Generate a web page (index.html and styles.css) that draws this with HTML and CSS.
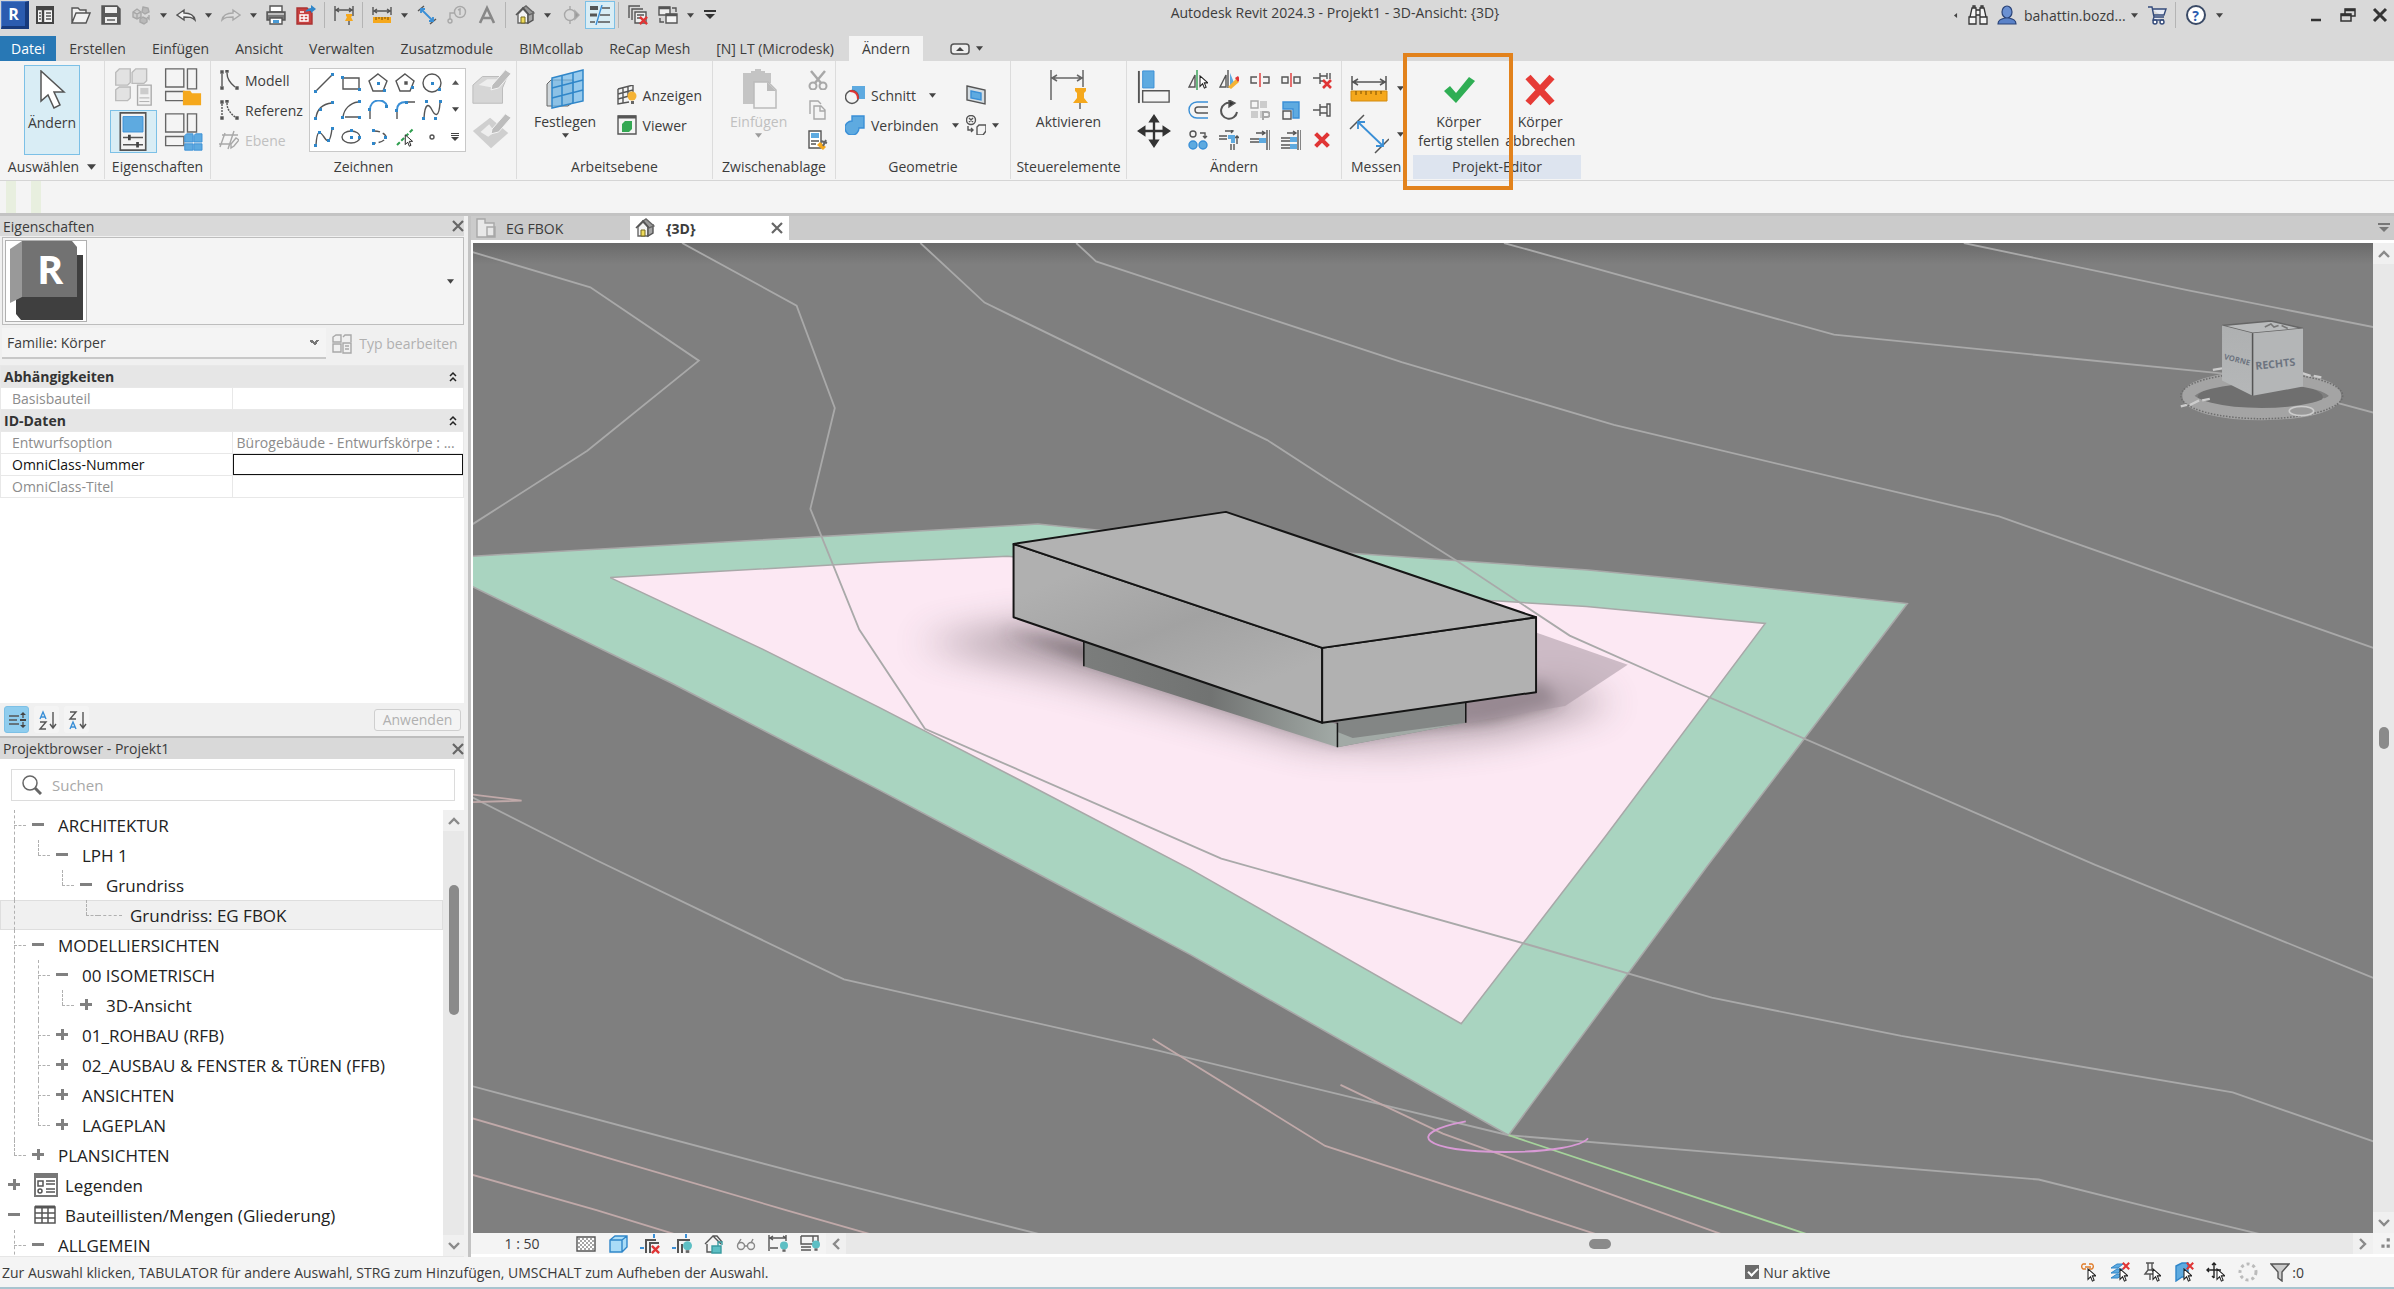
FILE: index.html
```html
<!DOCTYPE html>
<html lang="de">

<head>
    <meta charset="UTF-8">
    <meta name="viewport" content="width=device-width, initial-scale=1.0">
    <title>Autodesk Revit 2024.3 - Projekt1 - 3D-Ansicht: {3D}</title>
    <link rel="stylesheet" href="styles.css">
</head>

<body>
    <!-- shared icon parts -->
    <svg class="defs" width="0" height="0" aria-hidden="true">
        <symbol id="caret" viewBox="0 0 8 5"><path d="M0 0h8L4 5z" fill="#444" stroke="none"/></symbol>
        <symbol id="cursor" viewBox="0 0 10 16"><path d="M1 1v12l3-3 2 5 2-1-2-5h4z" fill="#fff" stroke="#222" stroke-width="1.2"/></symbol>
        <symbol id="redx" viewBox="0 0 10 10"><path d="M1 1l8 8M9 1l-8 8" stroke="#e03535" stroke-width="2.6" fill="none"/></symbol>
        <symbol id="bulb" viewBox="0 0 10 14"><circle cx="5" cy="5" r="5" fill="#5dbfc4" stroke="none"/><path d="M3 10h4v3H3z" fill="#666" stroke="none"/></symbol>
        <symbol id="home" viewBox="0 0 20 20">
            <path d="M3 9v9h10V9L8 4z" fill="#f4f4f4" stroke="#666"/>
            <path d="M13 9v9l5-3V7z" fill="#a5a5a5" stroke="#555"/>
            <path d="M8 3l3-2 8 7-5 2z" fill="#999" stroke="#666"/>
            <path d="M1 10l7-7 6 7" fill="none" stroke="#555" stroke-width="1.6"/>
            <path d="M6 12h4v6H6z" fill="#f0dc5a" stroke="#776a20" stroke-width="1"/>
        </symbol>
        <symbol id="cross" viewBox="0 0 12 12"><path d="M1 1l10 10M11 1L1 11" stroke="#666" stroke-width="2.2" fill="none"/></symbol>
        <symbol id="chev" viewBox="0 0 12 8"><path d="M1 7l5-5 5 5" stroke="#8a8a8a" stroke-width="2.4" fill="none"/></symbol>
        <symbol id="collapse" viewBox="0 0 8 12"><path d="M1 5l3-3 3 3M1 10l3-3 3 3" stroke="#222" stroke-width="1.5" fill="none"/></symbol>
    </svg>

    <header class="titlebar">
        <div class="quick">
            <button class="logo" aria-label="Revit">R</button>
            <button class="q" aria-label="Startseite"><svg class="ic" viewBox="0 0 20 20"><path d="M2 2h16v16H2z" fill="#f4f4f4" stroke="#444" stroke-width="2"/><path d="M2 4h16M8 4v14" stroke="#444" stroke-width="2.4"/><path d="M11 8h5M11 11h5M11 14h5M4 8h2M4 11h2M4 14h2"/></svg></button>
            <span class="gap"></span>
            <button class="q" aria-label="Öffnen"><svg class="ic" viewBox="0 0 20 20"><path d="M1 18V3h6l2 2h6v3M1 18L5 8h14l-4 10z" fill="#f2f2f2"/></svg></button>
            <button class="q" aria-label="Speichern"><svg class="ic" viewBox="0 0 20 20"><path d="M1 1h15l3 3v15H1z" fill="#5a5a5a"/><path d="M4 2h12v6H4zM4 12h12v6H4z" fill="#eee" stroke="none"/><path d="M6 15h8"/></svg></button>
            <button class="q" aria-label="Synchronisieren"><svg class="ic gr" viewBox="0 0 20 20"><path d="M2 7l4-3 4 3v5l-4 2-4-2zM2 7l4 2 4-2M6 9v5" fill="#ccc"/><path d="M12 2l5 1 1 4-4 2-3-2zM9 14l3-2 4 2v3l-3 2-4-2z" fill="#b9b9b9"/><path d="M18 10v4l-2-2"/></svg></button>
            <button class="c" aria-label="Mehr"><svg><use href="#caret"/></svg></button>
            <button class="q" aria-label="Rückgängig"><svg class="ic" viewBox="0 0 20 20"><path d="M1 10l7-5v3c6 0 10 2 11 7-3-3-6-3-11-3v3z" fill="#f2f2f2"/></svg></button>
            <button class="c" aria-label="Mehr"><svg><use href="#caret"/></svg></button>
            <button class="q" aria-label="Wiederherstellen"><svg class="ic gr" viewBox="0 0 20 20"><path d="M19 10l-7-5v3C6 8 2 10 1 15c3-3 6-3 11-3v3z" fill="#ddd"/></svg></button>
            <button class="c" aria-label="Mehr"><svg><use href="#caret"/></svg></button>
            <button class="q" aria-label="Drucken"><svg class="ic" viewBox="0 0 20 20"><path d="M4 1h12v6H4z" fill="#fff"/><path d="M1 7h18v8H1z" fill="#777"/><path d="M2 9h16" stroke="#ddd"/><path d="M4 13h12v6H4z" fill="#fff"/><path d="M7 15h6v3H7z" fill="#4a9bd6" stroke="none"/></svg></button>
            <button class="q" aria-label="PDF"><svg class="ic" viewBox="0 0 20 20"><path d="M1 3h10l5 5v11H1z" fill="#c8403f" stroke="#a33"/><path d="M4 10h8v6H4zM8 10v6M4 7h4M4 13h8" stroke="#fff"/><path d="M9 7c2-3 4-4 6-4V0l5 4-5 4V6c-2 0-4 0-6 1z" fill="#2f86c9" stroke="none"/></svg></button>
            <span class="sep"></span>
            <button class="q" aria-label="Bemaßung fixieren"><svg class="ic" viewBox="0 0 20 20"><path d="M1 1v15M19 1v10M2 5h16M5 3L2 5l3 2M15 3l3 2-3 2"/><path d="M12 9h6v2l-1 1 2 4h-8l2-4-1-1z" fill="#f5a81c" stroke="none"/><path d="M15 16v4" stroke="#555"/></svg></button>
            <span class="sep"></span>
            <button class="q" aria-label="Messen"><svg class="ic" viewBox="0 0 20 20"><path d="M1 2v8M19 2v8M2 6h16M5 4L2 6l3 2M15 4l3 2-3 2"/><path d="M1 12h18v6H1z" fill="#f5a81c" stroke="none"/><path d="M4 12v3M7 12v2M10 12v3M13 12v2M16 12v3" stroke="#7a4f00" stroke-width="1"/></svg></button>
            <button class="c" aria-label="Mehr"><svg><use href="#caret"/></svg></button>
            <button class="q" aria-label="Ausgerichtete Bemaßung"><svg class="ic" viewBox="0 0 20 20"><path d="M1 6l6-5M13 19l6-5"/><path d="M4 4l12 12M4 8V4h4M16 12v4h-4" stroke="#3a8fd6" stroke-width="1.8"/></svg></button>
            <button class="q" aria-label="Nach Kategorie beschriften"><svg class="ic gr" viewBox="0 0 20 20"><circle cx="13" cy="7" r="5.500"/><path d="M13 10V4l-2 1M8 8H3v6"/><circle cx="3" cy="16" r="2"/></svg></button>
            <button class="q" aria-label="Text"><svg class="ic gr" viewBox="0 0 20 20"><path d="M3 18L10 3l7 15M6 13h8" stroke="#888" stroke-width="2.6"/></svg></button>
            <span class="sep"></span>
            <button class="q" aria-label="3D-Standardansicht"><svg class="ic"><use href="#home"/></svg></button>
            <button class="c" aria-label="Mehr"><svg><use href="#caret"/></svg></button>
            <button class="q" aria-label="Schnitt"><svg class="ic gr" viewBox="0 0 20 20"><circle cx="10" cy="10" r="5.500"/><path d="M10 1v4M10 15v4M15 6l4 4-4 4z" fill="#999"/></svg></button>
            <button class="q on" aria-label="Feine Linien"><svg class="ic" viewBox="0 0 20 20"><path d="M0 3h8" stroke-width="4"/><path d="M0 10h7" stroke-width="3"/><path d="M0 17h5M12 3h8M10 10h10M8 17h12" stroke-width="1.500"/><path d="M12 0L6 20" stroke="#3a8fd6"/></svg></button>
            <span class="sep"></span>
            <button class="q" aria-label="Inaktive Ansichten schließen"><svg class="ic" viewBox="0 0 20 20"><path d="M1 13V1h11M4 15V4h11" /><path d="M7 7h11v11H7zM9 10h7M9 13h4" fill="#eee"/><svg x="11" y="11" width="9" height="9"><use href="#redx"/></svg></svg></button>
            <button class="q" aria-label="Fenster wechseln"><svg class="ic" viewBox="0 0 20 20"><path d="M1 2h11v8H1z" fill="#eee"/><path d="M8 9h11v9H8z" fill="#f4f4f4"/><path d="M1 3h11M8 10h11" stroke-width="2.5"/><path d="M14 3h4v4M2 13v4h4" /></svg></button>
            <button class="c" aria-label="Mehr"><svg><use href="#caret"/></svg></button>
            <button class="q narrow" aria-label="Schnellzugriff anpassen"><svg class="drop" viewBox="0 0 12 10"><path d="M0 1h12" stroke="#333" stroke-width="2"/><path d="M1 4h10L6 9z" fill="#333"/></svg></button>
        </div>
        <div class="apptitle">Autodesk Revit 2024.3 - Projekt1 - 3D-Ansicht: {3D}</div>
        <div class="account">
            <button class="c" aria-label="Suche einblenden"><svg class="left" viewBox="0 0 5 8"><path d="M5 0v8L0 4z" fill="#444"/></svg></button>
            <button class="q" aria-label="Suchen"><svg class="ic" viewBox="0 0 20 20"><path d="M1 12h7v7H1zM12 12h7v7h-7zM2 12l2-9h4v9M18 12l-2-9h-4v9M8 5h4v5H8zM5 1h2v2H5zM13 1h2v2h-2z" fill="#f4f4f4" stroke="#333" stroke-width="1.300"/></svg></button>
            <button class="user"><svg class="ic" viewBox="0 0 20 20"><path d="M1 19c0-4 3-5 7-6V9h4v4c4 1 7 2 7 6z" fill="#5a82c8" stroke="#2b4478" stroke-width="1.200"/><ellipse cx="10" cy="7" rx="5" ry="6" fill="#6a90d2" stroke="#2b4478" stroke-width="1.200"/></svg>bahattin.bozd...<svg class="ca"><use href="#caret"/></svg></button>
            <button class="q" aria-label="App Store"><svg class="ic" viewBox="0 0 20 20"><path d="M1 2h4l2 10h10M5 4h14l-2 6H7M7 12l-1 3h11" fill="#e8ecf5" stroke="#334a7a"/><circle cx="8" cy="17" r="2" fill="#fff" stroke="#334a7a"/><circle cx="15" cy="17" r="2" fill="#fff" stroke="#334a7a"/></svg></button>
            <span class="sep"></span>
            <button class="help" aria-label="Hilfe">?</button>
            <button class="c" aria-label="Mehr"><svg><use href="#caret"/></svg></button>
        </div>
        <div class="winbtns">
            <button aria-label="Minimieren"><svg viewBox="0 0 16 16"><path d="M3 13h10" stroke="#333" stroke-width="2.500"/></svg></button>
            <button aria-label="Wiederherstellen"><svg viewBox="0 0 16 16"><path d="M5 7V2h10v7h-4M1 7h10v7H1z" fill="none" stroke="#333" stroke-width="1.500"/><path d="M5 3h10M1 8h10" stroke="#333" stroke-width="2.500"/></svg></button>
            <button aria-label="Schließen"><svg viewBox="0 0 16 16"><path d="M2 2l12 12M14 2L2 14" stroke="#333" stroke-width="3"/></svg></button>
        </div>
    </header>

    <nav class="tabs">
        <button class="file">Datei</button>
        <button>Erstellen</button>
        <button>Einfügen</button>
        <button>Ansicht</button>
        <button>Verwalten</button>
        <button>Zusatzmodule</button>
        <button>BIMcollab</button>
        <button>ReCap Mesh</button>
        <button>[N] LT (Microdesk)</button>
        <button class="active">Ändern</button>
        <button class="mini" aria-label="Multifunktionsleiste minimieren"><svg class="pill" viewBox="0 0 20 12"><rect x="1" y="1" width="18" height="10" rx="3" fill="#eee" stroke="#555" stroke-width="1.500"/><path d="M6 8l4-4 4 4z" fill="#444"/></svg><svg class="ca"><use href="#caret"/></svg></button>
    </nav>

    <section class="ribbon">
        <div class="panel p-select">
            <div class="body">
                <button class="big on"><svg viewBox="0 0 40 40"><path d="M9 1v30l7-6 6 13 6-3-6-13h10z" fill="#fff" stroke="#555" stroke-width="1.500"/></svg>Ändern</button>
            </div>
            <h2>Auswählen <svg class="ca"><use href="#caret"/></svg></h2>
        </div>

        <div class="panel p-props">
            <div class="body quad">
                <button aria-label="Typeneigenschaften"><svg viewBox="0 0 44 44"><g fill="#e2e2e2" stroke="#bbb" stroke-width="1.500"><path d="M3 6l4-4h12v15l-3 3H3zM21 6l4-4h12v13l-3 3H21zM3 25l4-3h12v12l-3 3H3z"/></g><path d="M27 20h15v22H27z" fill="#f2f2f2" stroke="#aaa" stroke-width="1.500"/><path d="M30 23h9v7h-9z" fill="#ccc"/><path d="M29 34h11M29 38h11" stroke="#aaa"/></svg></button>
                <button aria-label="Familienkategorie"><svg viewBox="0 0 44 44"><path d="M4 2h20v20H4zM28 2h10v22H28zM4 27h20v10H4z" fill="none" stroke="#666" stroke-width="1.500"/><path d="M23 26h8l2 3h10v13H23z" fill="#f5a81c"/></svg></button>
                <button class="on" aria-label="Eigenschaften"><svg viewBox="0 0 44 44"><path d="M8 1h28v41H8z" fill="#f4f4f4" stroke="#555" stroke-width="1.800"/><path d="M11 5h22v17H11z" fill="#5eaae0" stroke="#3a8fd6"/><path d="M11 28h22M11 36h22" stroke="#555" stroke-width="1.500"/><path d="M18 25v6M27 33v6" stroke="#444" stroke-width="3"/></svg></button>
                <button aria-label="Familientypen"><svg viewBox="0 0 44 44"><path d="M4 2h20v20H4zM28 2h10v20H28zM4 27h20v10H4z" fill="none" stroke="#666" stroke-width="1.500"/><path d="M25 26l2-2h7v9h-9zM35 26l2-2h7v9h-9zM25 35h9v7h-9zM35 35h9v7h-9z" fill="#5eaae0" stroke="#3a8fd6"/></svg></button>
            </div>
            <h2>Eigenschaften</h2>
        </div>

        <div class="panel p-draw">
            <div class="body">
                <div class="rows">
                    <button><svg class="ic" viewBox="0 0 20 20"><path d="M3 4v12M8 3c0 6 3 10 8 14"/><path d="M2 1h2v2H2zM2 17h2v2H2zM7 0h2v2H7zM17 17h2v2h-2z" fill="#444"/></svg>Modell</button>
                    <button><svg class="ic" viewBox="0 0 20 20"><path d="M3 4v12M8 3c0 6 3 10 8 14" stroke-dasharray="2 1"/><path d="M2 1h2v2H2zM2 17h2v2H2zM7 0h2v2H7zM17 17h2v2h-2z" fill="#444"/></svg>Referenz</button>
                    <button disabled><svg class="ic gr" viewBox="0 0 20 20"><path d="M6 3L1 17M15 1L9 19M3 5h16M0 14h12M12 14l5-6 3 2-5 6-3 2z"/></svg>Ebene</button>
                </div>
                <div class="gallery">
                    <button aria-label="Linie"><svg class="ic" viewBox="0 0 20 20"><path d="M2 18L18 2"/><path class="pt" d="M0 17h3v3H0zM17 0h3v3h-3z"/></svg></button>
                    <button aria-label="Rechteck"><svg class="ic" viewBox="0 0 20 20"><path d="M2 5h16v11H2z"/><path class="pt" d="M0 3h3v3H0zM17 15h3v3h-3z"/></svg></button>
                    <button aria-label="Inneres Polygon"><svg class="ic" viewBox="0 0 20 20"><path d="M10 1l9 7-4 10H5L1 8z"/><path class="pt" d="M9 9h3v3H9zM15 16h3v3h-3z"/></svg></button>
                    <button aria-label="Äußeres Polygon"><svg class="ic" viewBox="0 0 20 20"><path d="M10 1l9 7-4 10H5L1 8z"/><path d="M10 9h2v2h-2z" fill="#444"/><path class="pt" d="M16 13h3v3h-3z"/></svg></button>
                    <button aria-label="Kreis"><svg class="ic" viewBox="0 0 20 20"><circle cx="10" cy="10" r="9"/><path class="pt" d="M9 9h3v3H9zM16 15h3v3h-3z"/></svg></button>
                    <button class="sc" aria-label="Nach oben"><svg viewBox="0 0 8 5"><path d="M0 5h8L4 0z" fill="#555"/></svg></button>
                    <button aria-label="Bogen"><svg class="ic" viewBox="0 0 20 20"><path d="M2 18C3 9 9 4 18 3"/><path class="pt" d="M0 17h3v3H0zM5 8h3v3H5zM17 1h3v3h-3z"/></svg></button>
                    <button aria-label="Bogen Mittelpunkt"><svg class="ic" viewBox="0 0 20 20"><path d="M2 17C3 9 9 3 17 2M4 17h13" /><path class="pt" d="M0 16h3v3H0zM17 0h3v3h-3zM17 16h3v3h-3z"/></svg></button>
                    <button aria-label="Tangentialbogen"><svg class="ic" viewBox="0 0 20 20"><path d="M2 19v-9"/><path d="M2 10C2-2 17-2 19 6" stroke="#3a8fd6" stroke-width="2"/><path class="pt" d="M0 8h3v3H0zM17 5h3v3h-3z"/></svg></button>
                    <button aria-label="Rundung"><svg class="ic" viewBox="0 0 20 20"><path d="M2 19v-8M13 2h7"/><path d="M2 10c0-5 3-8 9-8" stroke="#3a8fd6" stroke-width="2"/><path class="pt" d="M0 9h3v3H0zM10 1h3v3h-3z"/></svg></button>
                    <button aria-label="Spline"><svg class="ic" viewBox="0 0 20 20"><path d="M2 18C3 2 7 4 10 10s7 8 8-7"/><path class="pt" d="M0 17h3v3H0zM3 0h3v3H3zM12 17h3v3h-3zM17 0h3v3h-3z"/></svg></button>
                    <button class="sc" aria-label="Nach unten"><svg><use href="#caret"/></svg></button>
                    <button aria-label="Freihandspline"><svg class="ic" viewBox="0 0 20 20"><path d="M2 18C3 2 6 4 10 10s6 6 8-8"/><path class="pt" d="M0 17h3v3H0zM4 4h3v3H4zM13 12h3v3h-3zM17 0h3v3h-3z"/></svg></button>
                    <button aria-label="Ellipse"><svg class="ic" viewBox="0 0 20 20"><ellipse cx="10" cy="10" rx="9" ry="6"/><path class="pt" d="M9 9h3v3H9zM9 2h3v3H9zM17 9h3v3h-3z"/></svg></button>
                    <button aria-label="Teilellipse"><svg class="ic" viewBox="0 0 20 20"><path d="M6 4c8 0 12 4 12 6s-4 6-12 6" stroke-dasharray="6 3"/><path class="pt" d="M4 2h3v3H4zM16 9h3v3h-3zM4 15h3v3H4z"/></svg></button>
                    <button aria-label="Linien auswählen"><svg class="ic" viewBox="0 0 20 20"><path d="M2 18L18 2" stroke="#2f9e4f" stroke-width="2" stroke-dasharray="4 2"/><svg x="9" y="7" width="9" height="13"><use href="#cursor"/></svg></svg></button>
                    <button aria-label="Punkt"><svg class="ic" viewBox="0 0 20 20"><circle cx="10" cy="10" r="2"/></svg></button>
                    <button class="sc" aria-label="Alle"><svg class="drop" viewBox="0 0 8 8"><path d="M0 0h8v1H0zM0 2h8v1H0zM0 4h8L4 8z" fill="#444"/></svg></button>
                </div>
                <div class="faces">
                    <button disabled aria-label="Auf Fläche zeichnen"><svg viewBox="0 0 44 44"><path d="M2 20l10-9h26l-5 12v16H2z" fill="#d6d6d6" stroke="#bbb"/><path d="M8 20l9-6h14l-6 9z" fill="#eee"/><path d="M22 20L36 4l6 4-13 15-8 2z" fill="#bdbdbd" stroke="#f4f4f4"/></svg></button>
                    <button disabled aria-label="Auf Arbeitsebene zeichnen"><svg viewBox="0 0 44 44"><path d="M2 22L20 8l19 16-18 16z" fill="#cfcfcf"/><path d="M10 23l9-8 6 8-7 5z" fill="#eee"/><path d="M22 20L36 4l6 4-13 15-8 2z" fill="#bdbdbd" stroke="#f4f4f4"/></svg></button>
                </div>
            </div>
            <h2>Zeichnen</h2>
        </div>

        <div class="panel p-plane">
            <div class="body">
                <button class="big"><svg viewBox="0 0 40 40"><path d="M2 15l4-4h22v22l-5 4H2z" fill="#cfd6da" stroke="#666"/><path d="M7 9l31-8v31L7 39z" fill="#6fb8ea" fill-opacity=".7" stroke="#2f86c9" stroke-width="1.500"/><path d="M17 6v31M28 4v30M7 19l31-8M7 29l31-8" stroke="#2f86c9" stroke-width="1.500"/></svg>Festlegen<svg class="ca"><use href="#caret"/></svg></button>
                <div class="rows two">
                    <button><svg class="ic" viewBox="0 0 20 20"><path d="M1 4l15-4v12M1 4v15l11-2M6 3v15M11 2v10M1 9l15-4M1 14l11-3"/><circle cx="15" cy="11" r="4.500" fill="#f5b335" stroke="none"/><path d="M14 16h3v3h-3z" fill="#666" stroke="none"/></svg>Anzeigen</button>
                    <button><svg class="ic" viewBox="0 0 20 20"><path d="M1 1h18v18H1z" fill="#f4f4f4"/><path d="M1 2h18" stroke-width="3"/><path d="M5 9l3-3h7v8l-3 3H5z" fill="#34a853" stroke="none"/></svg>Viewer</button>
                </div>
            </div>
            <h2>Arbeitsebene</h2>
        </div>

        <div class="panel p-clip">
            <div class="body">
                <button class="big" disabled><svg viewBox="0 0 40 40"><path d="M4 4h8V2h4V0h6v2h4v2h6v10H16v21H4z" fill="#c4c4c4"/><path d="M15 13h14l8 8v18H15z" fill="#f4f4f4" stroke="#bbb" stroke-width="1.500"/><path d="M28 13v9h9z" fill="#bbb"/></svg>Einfügen<svg class="ca"><use href="#caret"/></svg></button>
                <div class="rows icons">
                    <button aria-label="Ausschneiden"><svg class="ic gr" viewBox="0 0 20 20"><path d="M3 1l10 12M17 1L7 13" stroke-width="2.500"/><circle cx="5" cy="16" r="3.500" stroke-width="2"/><circle cx="15" cy="16" r="3.500" stroke-width="2"/></svg></button>
                    <button aria-label="Kopieren"><svg class="ic gr" viewBox="0 0 20 20"><path d="M2 14V1h8l3 3M6 6h7l4 4v9H6zM12 6v5h5"/></svg></button>
                    <button aria-label="Typeneigenschaften anpassen"><svg class="ic" viewBox="0 0 20 20"><path d="M1 1h12v17H1z" fill="#fff"/><path d="M3 3h8v5H3z" fill="#5eaae0" stroke="none"/><path d="M3 11h8M3 14h5"/><path d="M9 15l3-3 6 5-3 3z" fill="#f5a81c" stroke="none"/><path d="M13 11l6 2M18 10l-3 6" stroke="#666" stroke-width="2"/></svg></button>
                </div>
            </div>
            <h2>Zwischenablage</h2>
        </div>

        <div class="panel p-geo">
            <div class="body">
                <div class="rows two">
                    <button><svg class="ic" viewBox="0 0 20 20"><path d="M7 1h13v13H7z" fill="#5eaae0" stroke="none"/><circle cx="7" cy="12" r="6.500" fill="#f4f4f4"/><path d="M5 6c5 0 8 3 8 8" stroke="#e03535" stroke-width="2"/></svg>Schnitt<svg class="ca"><use href="#caret"/></svg></button>
                    <button><svg class="ic" viewBox="0 0 20 20"><path d="M7 1h12v12h-5a7 7 0 1 1-7-7z" fill="#5eaae0" stroke="#3a8fd6"/></svg>Verbinden<svg class="ca"><use href="#caret"/></svg></button>
                </div>
                <div class="rows two right">
                    <button aria-label="Öffnung"><svg class="ic" viewBox="0 0 20 20"><path d="M1 1l18 4v14L1 15z" fill="#d5dde2"/><path d="M5 6l10 2v7L5 13z" fill="#5eaae0" stroke="#3a8fd6"/></svg></button>
                    <button aria-label="Abbruch"><svg class="ic" viewBox="0 0 20 20"><circle cx="5" cy="5" r="4.500"/><path d="M3 3l4 4M7 3L3 7M2 11v4h5M5 13l2 2-2 2M11 12l2-2h7v6l-3 4h-6z"/></svg><svg class="ca"><use href="#caret"/></svg></button>
                </div>
            </div>
            <h2>Geometrie</h2>
        </div>

        <div class="panel p-ctrl">
            <div class="body">
                <button class="big"><svg viewBox="0 0 40 40"><path d="M3 1v30M35 1v17M4 9h30M9 6L4 9l5 3M29 6l5 3-5 3" fill="none" stroke="#666" stroke-width="1.500"/><path d="M27 19h11v3l-2 2v5l4 5H25l4-5v-5l-2-2z" fill="#f5a81c"/><path d="M32 34v6" stroke="#666" stroke-width="1.500"/></svg>Aktivieren</button>
            </div>
            <h2>Steuerelemente</h2>
        </div>

        <div class="panel p-modify">
            <div class="body">
                <div class="stack">
                    <button aria-label="Ausrichten"><svg viewBox="0 0 36 36"><path d="M2 1v34" stroke="#555" stroke-width="2"/><path d="M6 1h12v18H6z" fill="#5eaae0" stroke="#3a8fd6"/><path d="M6 22h28v12H6z" fill="#f4f4f4" stroke="#555" stroke-width="1.500"/></svg></button>
                    <button aria-label="Verschieben"><svg viewBox="0 0 36 36"><path d="M18 6v24M6 18h24" stroke="#333" stroke-width="2.500"/><path d="M18 0l6 9H12zM18 36l6-9H12zM0 18l9-6v12zM36 18l-9-6v12z" fill="#333"/></svg></button>
                </div>
                <div class="tools">
                    <button aria-label="Spiegeln - Achse wählen"><svg class="ic" viewBox="0 0 20 20"><path d="M7 5v12H1z"/><path d="M9 0v20" stroke="#2f9e4f"/><svg x="11" y="5" width="9" height="14"><use href="#cursor"/></svg></svg></button>
                    <button aria-label="Spiegeln - Achse zeichnen"><svg class="ic" viewBox="0 0 20 20"><path d="M7 5v12H1zM9 0v18"/><path d="M11 3v12h5z" fill="#5eaae0" stroke="none"/><path d="M9 17l8-8 3 3-8 7z" fill="#f5b335" stroke="none"/><path d="M16 8l3-2 2 3-2 3z" fill="#e03535" stroke="none"/></svg></button>
                    <button aria-label="Element teilen"><svg class="ic" viewBox="0 0 20 20"><path d="M7 7H1v6h6M13 7h6v6h-6"/><path d="M10 3v14" stroke="#e03535"/></svg></button>
                    <button aria-label="Mit Abstand teilen"><svg class="ic" viewBox="0 0 20 20"><path d="M1 7h6v6H1zM13 7h6v6h-6z"/><path d="M10 3v14" stroke="#e03535"/></svg></button>
                    <button aria-label="Lösen"><svg class="ic" viewBox="0 0 20 20"><path d="M1 8h7M8 3v11M8 6h7M8 11h5M15 3v6M18 3v6"/><svg x="10" y="9" width="10" height="10"><use href="#redx"/></svg></svg></button>
                    <button aria-label="Versatz"><svg class="ic" viewBox="0 0 20 20"><path d="M20 2H9a8 8 0 0 0 0 16h11" stroke="#3a8fd6"/><path d="M20 7H10a3 3 0 0 0 0 6h10"/></svg></button>
                    <button aria-label="Drehen"><svg class="ic" viewBox="0 0 20 20"><path d="M12 3a8 8 0 1 0 6 9" stroke-width="2"/><path d="M10 0l6 3-6 4z" fill="#333"/></svg></button>
                    <button disabled aria-label="Reihe"><svg class="ic gr" viewBox="0 0 20 20"><path d="M1 1h7v7H1z"/><path d="M10 1h7v7h-7zM1 11h7v7H1zM10 11h3v7h-3z" fill="#ccc" stroke="none"/><path d="M13 20v-8h4a2 2 0 0 1 0 5h-3" stroke-width="2"/></svg></button>
                    <button aria-label="Skalieren"><svg class="ic" viewBox="0 0 20 20"><path d="M2 2h16v16h-6V9H2z" fill="#5eaae0" stroke="#3a8fd6"/><path d="M2 11h8v8H2z"/></svg></button>
                    <button aria-label="Fixieren"><svg class="ic" viewBox="0 0 20 20"><path d="M1 10h7M8 4v12M8 7h7M8 13h7M15 4v12h3V4z"/></svg></button>
                    <button aria-label="Kopieren"><svg class="ic" viewBox="0 0 20 20"><circle cx="5" cy="4" r="3"/><path d="M12 3h5v5M15 6l2 2 2-2"/><path d="M5 11a4 4 0 1 1 0 8 4 4 0 0 1 0-8zM15 11a4 4 0 1 1 0 8 4 4 0 0 1 0-8z" fill="#5eaae0" stroke="#3a8fd6"/></svg></button>
                    <button aria-label="Stutzen/Dehnen Ecke"><svg class="ic" viewBox="0 0 20 20"><path d="M0 6h8M0 9h8M12 14v6M15 14v6M6 1h8M12 0l2 1-2 2M18 14V7M16 8l2-2 2 2"/><path d="M9 5h7v8h-4V9H9z" fill="#5eaae0" stroke="none"/></svg></button>
                    <button aria-label="Stutzen/Dehnen Element"><svg class="ic" viewBox="0 0 20 20"><path d="M0 9h9M0 12h9M6 3h8M12 1l3 2-3 2M17 0v20M20 0v20"/><path d="M9 8h7v5H9z" fill="#5eaae0" stroke="none"/></svg></button>
                    <button aria-label="Mehrere Elemente"><svg class="ic" viewBox="0 0 20 20"><path d="M0 8h9M0 11h9M0 15h9M0 18h9M6 3h8M12 1l3 2-3 2M17 0v20M20 0v20"/><path d="M9 7h7v5H9zM9 14h7v5H9z" fill="#5eaae0" stroke="none"/></svg></button>
                    <button aria-label="Löschen"><svg class="ic" viewBox="0 0 20 20"><svg x="2" y="2" width="16" height="16"><use href="#redx"/></svg></svg></button>
                </div>
            </div>
            <h2>Ändern</h2>
        </div>

        <div class="panel p-measure">
            <div class="body">
                <div class="stack wide">
                    <button aria-label="Messen"><svg viewBox="0 0 40 40"><path d="M3 8v14M37 8v14M4 14h32M9 11l-5 3 5 3M31 11l5 3-5 3" fill="none" stroke="#555" stroke-width="1.500"/><path d="M2 23h36v10H2z" fill="#f5a81c" stroke="#d28a0e"/><path d="M7 23v4M12 23v3M17 23v4M22 23v3M27 23v4M32 23v3" stroke="#7a4f00"/></svg><svg class="ca"><use href="#caret"/></svg></button>
                    <button aria-label="Bemaßung"><svg viewBox="0 0 40 40"><path d="M1 15L15 1M26 39l14-14" stroke="#555" stroke-width="1.500"/><path d="M9 8l25 24M9 15V8h7M34 25v7h-7" fill="none" stroke="#3a8fd6" stroke-width="1.800"/></svg><svg class="ca"><use href="#caret"/></svg></button>
                </div>
            </div>
            <h2>Messen</h2>
        </div>

        <div class="panel p-editor">
            <div class="body">
                <button class="big"><svg viewBox="0 0 40 40"><path d="M5 22l6-5 6 7L30 8l6 4-19 22z" fill="#2fae54"/></svg>Körper<br>fertig stellen</button>
                <button class="big"><svg viewBox="0 0 40 40"><path d="M8 8l24 26M32 8L8 34" stroke="#e63b36" stroke-width="7"/></svg>Körper<br>abbrechen</button>
            </div>
            <h2>Projekt-Editor</h2>
            <div class="highlight"></div>
        </div>
    </section>

    <div class="options"><i></i><i></i></div>

    <main>
        <aside>
            <div class="phead"><h3>Eigenschaften</h3><button aria-label="Schließen"><svg><use href="#cross"/></svg></button></div>
            <div class="typebox">
                <svg class="thumb" viewBox="0 0 80 80"><path d="M10 56h60V14h7v65H15l-5-6z" fill="#3f3f3f"/><path d="M4 8l12-8v56L4 62z" fill="#999"/><path d="M16 0h50l5 6v50H16z" fill="#727272"/><text x="31" y="43">R</text></svg>
                <svg class="ca"><use href="#caret"/></svg>
            </div>
            <div class="family">
                <select aria-label="Familie"><option>Familie: Körper</option></select>
                <button disabled><svg class="ic gr" viewBox="0 0 20 20"><path d="M1 3l3-2h5v7H1zM11 3l2-2h6v7M1 10h8v8H1z"/><path d="M11 9h8v10h-8zM13 12h4M13 15h4"/></svg>Typ bearbeiten</button>
            </div>
            <div class="propwrap">
                <table class="props">
                    <tr class="grp"><th colspan="2">Abhängigkeiten <svg><use href="#collapse"/></svg></th></tr>
                    <tr><td>Basisbauteil</td><td></td></tr>
                    <tr class="grp"><th colspan="2">ID-Daten <svg><use href="#collapse"/></svg></th></tr>
                    <tr><td>Entwurfsoption</td><td>Bürogebäude - Entwurfskörpe : ...</td></tr>
                    <tr class="edit"><td><label for="omni">OmniClass-Nummer</label></td><td><input id="omni" type="text"></td></tr>
                    <tr><td>OmniClass-Titel</td><td></td></tr>
                </table>
            </div>
            <div class="sortbar">
                <button class="on" aria-label="Gruppiert"><svg class="ic" viewBox="0 0 20 20"><path d="M2 6h10M2 10h8M2 14h10M16 3v5M16 12v5"/><path d="M13 5l3-3 3 3zM13 15l3 3 3-3zM13 9h6v2h-6z" fill="#444" stroke="none"/></svg></button>
                <button aria-label="Aufsteigend"><svg class="ic" viewBox="0 0 20 20"><path d="M3 9l3-7 3 7M4 7h4" stroke="#3a8fd6"/><path d="M3 12h6l-6 7h6M16 2v15M13 14l3 4 3-4"/></svg></button>
                <button aria-label="Absteigend"><svg class="ic" viewBox="0 0 20 20"><path d="M3 19l3-7 3 7M4 17h4" stroke="#3a8fd6"/><path d="M3 2h6L3 9h6M16 2v15M13 14l3 4 3-4"/></svg></button>
                <button class="apply" disabled>Anwenden</button>
            </div>
            <div class="phead second"><h3>Projektbrowser - Projekt1</h3><button aria-label="Schließen"><svg><use href="#cross"/></svg></button></div>
            <div class="browser">
                <label class="search"><svg viewBox="0 0 20 20"><circle cx="8" cy="8" r="7" fill="none" stroke="#666" stroke-width="1.500"/><path d="M13 13l6 6" stroke="#666" stroke-width="3"/></svg><input type="text" placeholder="Suchen" aria-label="Suchen"></label>
                <div class="treewrap">
                    <ul class="tree">
                        <li><i class="t"></i><b class="minus"></b>ARCHITEKTUR</li>
                        <li><i class="v"></i><i class="l"></i><b class="minus"></b>LPH 1</li>
                        <li><i class="v"></i><i></i><i class="l"></i><b class="minus"></b>Grundriss</li>
                        <li class="sel"><i class="v"></i><i></i><i></i><i class="l"></i><b class="dash"></b>Grundriss: EG FBOK</li>
                        <li><i class="t"></i><b class="minus"></b>MODELLIERSICHTEN</li>
                        <li><i class="v"></i><i class="t"></i><b class="minus"></b>00 ISOMETRISCH</li>
                        <li><i class="v"></i><i class="v"></i><i class="l"></i><b class="minus plus"></b>3D-Ansicht</li>
                        <li><i class="v"></i><i class="t"></i><b class="minus plus"></b>01_ROHBAU (RFB)</li>
                        <li><i class="v"></i><i class="t"></i><b class="minus plus"></b>02_AUSBAU &amp; FENSTER &amp; TÜREN (FFB)</li>
                        <li><i class="v"></i><i class="t"></i><b class="minus plus"></b>ANSICHTEN</li>
                        <li><i class="v"></i><i class="l"></i><b class="minus plus"></b>LAGEPLAN</li>
                        <li><i class="l"></i><b class="minus plus"></b>PLANSICHTEN</li>
                        <li><b class="minus plus"></b><svg viewBox="0 0 24 24"><path d="M1 1h22v22H1z" fill="#fff" stroke="#777" stroke-width="2"/><path d="M1 3h22" stroke="#777" stroke-width="4"/><path d="M4 8h5v5H4zM12 8h9M12 11h9M12 16h9M12 19h9" fill="none" stroke="#555" stroke-width="1.500"/><circle cx="6" cy="18" r="2" fill="none" stroke="#555" stroke-width="1.500"/></svg>Legenden</li>
                        <li><b class="minus"></b><svg viewBox="0 0 24 24"><path d="M1 4h20v16H1zM1 10h20M1 15h20M8 4v16M14 4v16" fill="#fff" stroke="#555" stroke-width="1.500"/><path d="M1 4h20" stroke="#555" stroke-width="3"/></svg>Bauteillisten/Mengen (Gliederung)</li>
                        <li><i class="t"></i><b class="minus"></b>ALLGEMEIN</li>
                    </ul>
                    <div class="vscroll">
                        <button aria-label="Nach oben"><svg class="chev"><use href="#chev"/></svg></button>
                        <span class="thumbbar"></span>
                        <button aria-label="Nach unten"><svg class="chev down"><use href="#chev"/></svg></button>
                    </div>
                </div>
            </div>
        </aside>

        <div class="docs">
            <div class="doctabs">
                <button><svg class="ic gr" viewBox="0 0 20 20"><path d="M1 1h8v4h9v13h-7v1H1zM11 9h8v10h-8z" fill="#e8e8e8"/></svg>EG FBOK</button>
                <button class="active"><svg class="ic"><use href="#home"/></svg>{3D}<svg class="x"><use href="#cross"/></svg></button>
                <button class="list" aria-label="Alle Ansichten"><svg class="drop" viewBox="0 0 12 10"><path d="M0 1h12" stroke="#777" stroke-width="2"/><path d="M1 4h10L6 9z" fill="#777"/></svg></button>
            </div>
            <div class="viewrow">
                <svg class="scene" viewBox="310 159 1244 648" preserveAspectRatio="xMidYMid slice">
                    <defs>
                        <linearGradient id="top" x1="0" y1="0" x2="0" y2="1"><stop offset="0" stop-color="#6a6a6a"/><stop offset="1" stop-color="#7f7f7f"/></linearGradient>
                        <linearGradient id="side" x1="0" y1="0.300" x2="0.500" y2="1"><stop offset="0" stop-color="#b0b0b0"/><stop offset="0.500" stop-color="#a2a2a2"/><stop offset="1" stop-color="#b0b0b0"/></linearGradient>
                        <linearGradient id="base" x1="0" y1="0" x2="1" y2="0"><stop offset="0" stop-color="#7b7d7c"/><stop offset="0.500" stop-color="#717372"/><stop offset="1" stop-color="#a2aaa6"/></linearGradient>
                        <linearGradient id="cube" x1="0" y1="0" x2="0" y2="1"><stop offset="0" stop-color="#aeb0b1"/><stop offset="1" stop-color="#b5b7b8"/></linearGradient>
                        <filter id="soft" x="-30%" y="-60%" width="160%" height="220%"><feGaussianBlur stdDeviation="12"/></filter>
                        <filter id="soft2" x="-30%" y="-50%" width="160%" height="200%"><feGaussianBlur stdDeviation="5"/></filter>
                    </defs>
                    <path d="M300 150h1270v670H300z" fill="#7f7f7f"/>
                    <path d="M300 159h1270v14H300z" fill="url(#top)"/>

                    <!-- plot -->
                    <path class="edge" d="M300 365L310 364L576 349L680 343L720 347L885 362L1040 373L1101 379L1249 395L1118 567L988 743L780 625L667 565L576 517L440 447L310 384L300 379z" fill="#a9d4c0"/>
                    <path class="edge" d="M400 378L576 368L660 364L976 393L1039 397L1156 408L1051 548L957 670L780 569L667 510L576 463L500 425z" fill="#fce8f3"/>

                    <!-- shadow and building -->
                    <path d="M600 420l70-12 50 0 200 66 100-26 38 12-70 20-70 8-60-2-160-44z" fill="#554850" opacity=".45" filter="url(#soft)"/>
                    <path d="M655 412l55 20 166 52 100-12 45-12-10-14-150 6z" fill="#383036" opacity=".5" filter="url(#soft2)"/>
                    <path d="M1006 414l60 21-41 27-65 11-10-20z" fill="#a596a0" opacity=".55"/>
                    <path d="M710 420l166 54v15l-166-53z" fill="url(#base)"/>
                    <path d="M876 470l84-12v15l-84 16z" fill="#838685"/>
                    <path d="M876 479l10 4 74-10-84 16z" fill="#a2aaa6"/>
                    <path class="thin" d="M710 420v16M876 473v16M960 459v14"/>
                    <path class="line" d="M664 356l202 68v49l-202-69z" fill="url(#side)"/>
                    <path class="line" d="M866 424l140-20v49l-140 20z" fill="#b1b1b1"/>
                    <path class="line" d="M664 356l139-21 203 69-140 20z" fill="#b2b2b2"/>

                    <!-- contour lines -->
                    <g class="contour">
                        <path d="M310 165l77 23 71 48-73 59-75 48"/>
                        <path d="M447 159l75 41 25 67-16 66 32 79 43 65 194 85 200 56 121 35 124 25 217 37 92 32"/>
                        <path d="M603 159l42 39 185 90 40 26"/>
                        <path d="M870 314l84 53 74 49 72 32 272 118 182 74"/>
                        <path d="M705 159l13 12 200 66 139 41 252 60 245 86"/>
                        <path d="M985 159l216 60 260 26 93 25"/>
                        <path d="M1286 159l147 31 121 24"/>
                        <path d="M310 522l81 41 162 78 203 46 232 56 347 29 80 20 70 17"/>
                        <path d="M310 711l222 59 150 38"/>
                        <path class="pink" d="M310 732l205 60 56 16M310 769l81 23 52 16M755 680l113 70 178 58M878 710l67 32 183 66M310 520l32 4-32 1"/>
                        <path class="green" d="M988 743l196 65"/>
                        <path class="mag" d="M960 734c-42 8-28 20 26 20 30 0 50-4 54-9"/>
                    </g>

                    <!-- view cube -->
                    <ellipse cx="1480" cy="260" rx="41" ry="10" fill="#6f6f6f"/>
                    <ellipse cx="1481" cy="259" rx="48" ry="12" fill="none" stroke="#a4a4a4" stroke-width="8"/>
                    <ellipse cx="1481" cy="259" rx="53" ry="15" fill="none" stroke="#6d6d6d" stroke-width="1" stroke-dasharray="1 1"/>
                    <ellipse cx="1507" cy="269" rx="8" ry="3" fill="#999" stroke="#ccc"/>
                    <path d="M1428 266l4-1m2 0l6-3m2 0l5-1M1507 244l6 2m2 0l5 1M1449 242l6-1" fill="none" stroke="#ccc" stroke-width="1.500"/>
                    <path d="M1455 213l32-3 21 5-33 3z" fill="#b9bbbc" stroke="#666" stroke-width="1"/>
                    <path d="M1455 213l20 5v41l-20-10z" fill="url(#cube)"/>
                    <path d="M1475 218l33-3v38l-33 6z" fill="#b4b6b7"/>
                    <path d="M1475 218v41" stroke="#555" stroke-width="1"/>
                    <path d="M1483 214l4-2 2 2 3-1m2 0l4 2" fill="none" stroke="#777" stroke-width="1"/>
                    <text class="cubetxt small" transform="rotate(14 1456 235)" x="1456" y="235">VORNE</text>
                    <text class="cubetxt" transform="rotate(-6 1477 242)" x="1477" y="242">RECHTS</text>
                </svg>
                <div class="vscroll view">
                    <button aria-label="Nach oben"><svg class="chev"><use href="#chev"/></svg></button>
                    <span class="thumbbar"></span>
                    <button aria-label="Nach unten"><svg class="chev down"><use href="#chev"/></svg></button>
                </div>
            </div>
            <div class="viewbar">
                <button class="scale">1 : 50</button>
                <button aria-label="Detaillierungsgrad"><svg class="ic" viewBox="0 0 20 20"><path d="M1 3h18v14H1z" fill="#fff"/><path d="M2 5h16M4 7h14M2 9h16M4 11h14M2 13h16M4 15h14" stroke="#888" stroke-dasharray="2 2"/></svg></button>
                <button aria-label="Bildstil"><svg class="ic" viewBox="0 0 20 20"><path d="M2 6l5-4h12v11l-5 5H2zM2 6h12v12M14 6l5-4" fill="#a9dcf7" stroke="#2f86c9"/></svg></button>
                <button aria-label="Zuschneiden aus"><svg class="ic" viewBox="0 0 20 20"><path d="M6 19V6h10M10 19V9h9" stroke-width="2"/><path d="M0 14h4M14 0v4" stroke="#3a8fd6" stroke-width="2"/><svg x="11" y="11" width="9" height="9"><use href="#redx"/></svg></svg></button>
                <button aria-label="Zuschneidebereich"><svg class="ic" viewBox="0 0 20 20"><path d="M6 19V6h12M10 19V10" stroke-width="2"/><path d="M0 14h4M14 0v4" stroke="#3a8fd6" stroke-width="2"/><svg x="11" y="7" width="9" height="13"><use href="#bulb"/></svg></svg></button>
                <button aria-label="Ansicht entsperrt"><svg class="ic" viewBox="0 0 20 20"><path d="M3 10v8h5M1 10l8-8 8 8M9 2h4l5 6"/><path d="M8 12h9v7H8z" fill="#5dbfc4" stroke="#3a9ca1"/><path d="M14 12V8h4v3" stroke="#3a9ca1"/></svg></button>
                <button aria-label="Temporär ausblenden"><svg class="ic" viewBox="0 0 20 20"><g stroke="#888"><circle cx="5" cy="12" r="3.500"/><circle cx="15" cy="12" r="3.500"/><path d="M2 10l3-5M15 9l2-4M8 12h4"/></g></svg></button>
                <button aria-label="Temporäre Ansichtseigenschaften"><svg class="ic" viewBox="0 0 20 20"><path d="M1 1v16M18 1v6M2 4h16M5 2L2 4l3 2M15 2l3 2M2 14h8" /><svg x="12" y="7" width="8" height="12"><use href="#bulb"/></svg></svg></button>
                <button aria-label="Abhängigkeiten anzeigen"><svg class="ic" viewBox="0 0 20 20"><path d="M1 2h17v10M1 2v8h12M1 13h10M1 16h10M13 2v6"/><svg x="12" y="6" width="8" height="12"><use href="#bulb"/></svg></svg></button>
                <div class="hscroll">
                    <button aria-label="Nach links"><svg class="chev lft"><use href="#chev"/></svg></button>
                    <span class="thumbbar"></span>
                    <button aria-label="Nach rechts"><svg class="chev rgt"><use href="#chev"/></svg></button>
                </div>
                <svg class="grip" viewBox="0 0 20 20"><path d="M13 5h3v3h-3zM13 11h3v3h-3zM8 11h3v3H8z" fill="#888"/></svg>
            </div>
        </div>
    </main>

    <footer>
        <p>Zur Auswahl klicken, TABULATOR für andere Auswahl, STRG zum Hinzufügen, UMSCHALT zum Aufheben der Auswahl.</p>
        <label class="only"><input type="checkbox" checked>Nur aktive</label>
        <div class="picks">
            <button aria-label="Verknüpfungen auswählen"><svg class="ic" viewBox="0 0 20 20"><path d="M8 7H5a3 3 0 0 1 0-5h3M11 2h3a3 3 0 0 1 0 5h-3M7 5h6" stroke="#e07b28"/><svg x="9" y="6" width="9" height="14"><use href="#cursor"/></svg></svg></button>
            <button aria-label="Unterlagen auswählen"><svg class="ic" viewBox="0 0 20 20"><path d="M1 6l6-4h6l-5 4zM1 11l6-4h6l-5 4zM1 16l6-4h6l-5 4z" fill="#5eaae0" stroke="#2f86c9" stroke-width="1"/><svg x="9" y="6" width="9" height="14"><use href="#cursor"/></svg><svg x="12" y="0" width="8" height="8"><use href="#redx"/></svg></svg></button>
            <button aria-label="Fixierte Elemente auswählen"><svg class="ic" viewBox="0 0 20 20"><path d="M4 1h8M6 1v7M10 1v7M3 12l3-4h4l3 4zM8 12v6"/><svg x="10" y="6" width="9" height="14"><use href="#cursor"/></svg></svg></button>
            <button aria-label="Nach Fläche auswählen"><svg class="ic" viewBox="0 0 20 20"><path d="M2 4l6-3h6v14H8l-6 4z" fill="#5eaae0" stroke="#2f86c9"/><svg x="9" y="6" width="9" height="14"><use href="#cursor"/></svg><svg x="12" y="0" width="8" height="8"><use href="#redx"/></svg></svg></button>
            <button aria-label="Beim Auswählen ziehen"><svg class="ic" viewBox="0 0 20 20"><path d="M8 1v15M1 8h14M6 3l2-2 2 2M3 6L1 8l2 2M6 14l2 2" stroke="#222"/><svg x="10" y="6" width="9" height="14"><use href="#cursor"/></svg></svg></button>
            <button aria-label="Hintergrundprozesse"><svg class="ic" viewBox="0 0 20 20"><circle cx="10" cy="10" r="8" stroke="#bbb" stroke-width="3" stroke-dasharray="3 3"/></svg></button>
            <button class="filter"><svg class="ic" viewBox="0 0 20 20"><path d="M1 2h18l-7 8v9l-4-3v-6z" fill="#ccc"/></svg>:0</button>
        </div>
    </footer>
</body>

</html>
```
FILE: styles.css
```css
* {
    box-sizing: border-box;
}
body {
    margin: 0;
    height: 100vh;
    display: flex;
    flex-direction: column;
    overflow: hidden;
    font-family: "Open Sans", "Noto Sans", sans-serif;
    font-size: 14px;
    line-height: 19px;
    color: #3c3c3c;
    background: #f4f4f4;
}
button {
    font: inherit;
    color: inherit;
    background: none;
    border: none;
    padding: 0;
    margin: 0;
    display: flex;
    align-items: center;
    justify-content: center;
    white-space: nowrap;
}
button:disabled {
    color: #c0c0c0;
}
h2, h3, p, ul {
    margin: 0;
    padding: 0;
    font-weight: normal;
    font-size: 14px;
}
svg {
    display: block;
    flex: none;
}
.defs {
    position: absolute;
}
.ic {
    width: 20px;
    height: 20px;
    fill: none;
    stroke: #555;
    stroke-width: 1.4;
}
.gr {
    stroke: #a8a8a8;
}
.pt {
    fill: #2f86c9;
    stroke: none;
}
.ca, .c svg, .sc svg {
    width: 7px;
    height: 5px;
}
.drop {
    width: 12px;
    height: 10px;
}
.sc .drop {
    width: 8px;
    height: 8px;
}

/* title bar */
.titlebar {
    display: flex;
    height: 36px;
    flex: none;
    background: #d9d9d9;
}
.quick, .account {
    display: flex;
    align-items: center;
    height: 30px;
}
.q {
    width: 30px;
    height: 28px;
}
.q.narrow {
    width: 24px;
}
.c {
    width: 15px;
    height: 28px;
}
.gap {
    width: 6px;
}
.sep {
    width: 1px;
    height: 26px;
    margin: 0 4px 0 3px;
    background: #b4b4b4;
}
.on {
    background: #d9edf5;
    border: 1px solid #7cc0e6;
}
.logo {
    width: 28px;
    height: 28px;
    margin: 0 1px;
    background: #2b5cb0;
    border: 1px solid #4f7cc8;
    border-right: 4px solid #173a7c;
    border-bottom: 3px solid #173a7c;
    color: #fff;
    font-weight: bold;
    font-size: 16px;
}
.apptitle {
    flex: 1;
    text-align: center;
    padding: 3px 0 0 0;
}
.account {
    width: 360px;
}
.user {
    gap: 7px;
    padding: 0 4px;
}
.user .ca {
    margin-left: -2px;
}
.help {
    width: 20px;
    height: 20px;
    margin: 0 6px;
    border: 2px solid #3a4a66;
    border-radius: 10px;
    background: #fff;
    color: #2b5cb0;
    font-weight: bold;
}
.left {
    width: 5px;
    height: 8px;
}
.winbtns {
    display: flex;
    gap: 16px;
    height: 30px;
    padding: 0 6px 0 0;
}
.winbtns svg {
    width: 16px;
    height: 16px;
}

/* tabs */
.tabs {
    display: flex;
    flex: none;
    height: 25px;
    background: #d9d9d9;
}
.tabs button {
    padding: 0 13px;
}
.tabs .file {
    background: #2878b5;
    color: #fff;
    padding: 0 11px;
}
.tabs .active {
    margin-left: 2px;
    background: #f4f4f4;
}
.tabs .mini {
    margin-left: 14px;
    gap: 6px;
}
.pill {
    width: 20px;
    height: 12px;
}

/* ribbon */
.ribbon {
    display: flex;
    flex: none;
    height: 120px;
    border-bottom: 1px solid #d5d5d5;
}
.panel {
    display: flex;
    flex-direction: column;
    margin-bottom: 1px;
    border-right: 1px solid #dcdcdc;
}
.panel .body {
    display: flex;
    flex: 1;
    min-height: 0;
    padding-top: 4px;
    justify-content: center;
}
.panel h2 {
    flex: none;
    height: 24px;
    line-height: 24px;
    display: flex;
    justify-content: center;
    align-items: center;
    gap: 8px;
    white-space: nowrap;
}
.p-select { width: 105px; }
.p-props { width: 106px; }
.p-draw { width: 306px; }
.p-plane { width: 196px; }
.p-clip { width: 123px; }
.p-geo { width: 175px; }
.p-ctrl { width: 116px; }
.p-modify { width: 215px; }
.p-measure { width: 71px; }
.p-select h2 .ca {
    width: 9px;
    height: 6px;
}
.big {
    flex-direction: column;
    justify-content: flex-start;
    height: 90px;
    min-width: 56px;
    padding: 4px 3px 0;
}
.big svg {
    width: 40px;
    height: 40px;
    margin-bottom: 3px;
}
.big .ca {
    width: 7px;
    height: 5px;
    margin-top: 2px;
}
.big:disabled .ca {
    opacity: .5;
}
.panel .quad {
    display: grid;
    grid-template-columns: 47px 47px;
    grid-template-rows: 43px 43px;
    gap: 2px;
}
.quad svg {
    width: 42px;
    height: 40px;
}
.rows {
    display: flex;
    flex-direction: column;
}
.rows button {
    height: 30px;
    gap: 6px;
    justify-content: flex-start;
}
.rows.two {
    padding-top: 15px;
}
.rows .ca {
    margin-left: 7px;
}
.p-draw .rows {
    width: 90px;
}
.p-draw .body {
    padding-left: 8px;
    justify-content: flex-start;
}
.gallery {
    display: grid;
    grid-template-columns: repeat(5, 27px) 20px;
    grid-template-rows: repeat(3, 27px);
    width: 157px;
    height: 84px;
    margin-top: 3px;
    background: #fff;
    border: 1px solid #c8c8c8;
}
.faces {
    padding: 0 0 0 5px;
}
.faces svg {
    width: 42px;
    height: 44px;
}
.p-plane .body, .p-clip .body {
    justify-content: space-between;
    padding-left: 14px;
    padding-right: 10px;
}
.p-clip .body {
    padding-right: 7px;
}
.p-geo .body {
    justify-content: space-between;
    padding-left: 9px;
    padding-right: 6px;
}
.p-geo .right {
    width: 38px;
}
.p-geo .right .ca {
    margin-left: 0;
}
.stack {
    display: flex;
    flex-direction: column;
    padding-top: 4px;
    gap: 8px;
}
.stack svg {
    width: 34px;
    height: 36px;
}
.stack.wide {
    padding-top: 2px;
    gap: 4px;
}
.stack.wide button {
    gap: 8px;
}
.stack.wide svg {
    width: 40px;
    height: 42px;
}
.stack.wide .ca {
    width: 7px;
    height: 5px;
}
.p-modify .body {
    padding-left: 6px;
}
.tools {
    display: grid;
    grid-template-columns: repeat(5, 31px);
    grid-template-rows: repeat(3, 30px);
    margin-left: 12px;
}
.p-measure, .p-editor {
    border: none;
}
.p-measure .body {
    justify-content: flex-start;
    padding-left: 7px;
}
.p-measure h2 {
    justify-content: flex-start;
    padding-left: 9px;
}
.p-editor {
    position: relative;
    width: 168px;
}
.p-editor .body {
    padding-left: 5px;
}
.p-editor .big {
    flex: 1;
    padding: 4px 0 0;
}
.p-editor h2 {
    background: #dde4ef;
}
.highlight {
    position: absolute;
    left: -10px;
    top: -8px;
    width: 110px;
    height: 137px;
    border: 4px solid #e2821c;
}

.options {
    display: flex;
    flex: none;
    gap: 15px;
    height: 35px;
    padding-left: 6px;
    border-bottom: 3px solid #c3c3c3;
}
.options i {
    width: 10px;
    background: #e8efdf;
}

main {
    display: flex;
    flex: 1;
    min-height: 0;
}

/* palettes */
aside {
    display: flex;
    flex-direction: column;
    flex: none;
    width: 471px;
    padding-right: 4px;
    border-right: 3px solid #c3c3c3;
    background: #f0f0f0;
}
.phead {
    display: flex;
    flex: none;
    justify-content: space-between;
    align-items: center;
    height: 20px;
    padding: 0 0 0 3px;
    background: #d9d9d9;
}
.phead.second {
    height: 23px;
    border-top: 2px solid #bdbdbd;
}
.phead svg {
    width: 12px;
    height: 12px;
}
.typebox {
    display: flex;
    justify-content: space-between;
    align-items: center;
    flex: none;
    height: 88px;
    margin: 1px 0 0 2px;
    padding: 0 9px 0 2px;
    background: #f4f4f4;
    border: 1px solid #bdbdbd;
}
.thumb {
    width: 82px;
    height: 82px;
    border: 1px solid #b0b0b0;
    background: #fff;
}
.thumb text {
    font: bold 40px "Open Sans", sans-serif;
    fill: #fff;
}
.family {
    display: flex;
    flex: none;
    height: 40px;
    padding: 3px 0 6px 2px;
}
.family select {
    flex: 1;
    appearance: none;
    font: inherit;
    color: inherit;
    padding: 0 5px;
    border: none;
    border-bottom: 2px solid #c8c8c8;
    background-color: #f4f4f4;
    background-image: linear-gradient(45deg, transparent 40%, #777 40%, #777 75%, transparent 75%), linear-gradient(-45deg, transparent 40%, #777 40%, #777 75%, transparent 75%);
    background-size: 5px 5px;
    background-position: right 11px center, right 7px center;
    background-repeat: no-repeat;
}
.family button {
    width: 138px;
    gap: 7px;
    color: #b0b0b0;
}
.propwrap {
    flex: 1;
    min-height: 0;
    background: #fff;
}
.props {
    border-collapse: collapse;
    width: 100%;
    table-layout: fixed;
}
.props td, .props th {
    height: 22px;
    padding: 0 0 0 11px;
    line-height: 20px;
    text-align: left;
    white-space: nowrap;
    overflow: hidden;
    color: #8c8c8c;
    border: 1px solid #e8e8e8;
}
.props td + td {
    padding-left: 4px;
}
.props .grp th {
    padding: 0 6px 0 3px;
    background: #e6e6e6;
    color: #333;
}
.props th svg {
    float: right;
    width: 8px;
    height: 12px;
    margin-top: 4px;
}
.props .edit td {
    color: #111;
}
.props .edit td + td {
    padding: 0;
}
.props input {
    display: block;
    width: 100%;
    height: 21px;
    border: 1px solid #111;
    background: #fff;
}
.sortbar {
    display: flex;
    align-items: center;
    gap: 5px;
    flex: none;
    height: 33px;
    padding: 0 3px 0 4px;
}
.sortbar button {
    width: 25px;
    height: 27px;
    border-radius: 3px;
    background: #f4f4f4;
}
.sortbar .on {
    background: #8fcdee;
}
.sortbar .apply {
    width: 87px;
    height: 22px;
    margin-left: auto;
    border: 1px solid #cfcfcf;
    color: #b0b0b0;
}
.browser {
    display: flex;
    flex-direction: column;
    height: 498px;
    flex: none;
    background: #fff;
    border-bottom: 1px solid #e6e6e6;
}
.search {
    display: flex;
    align-items: center;
    gap: 8px;
    flex: none;
    height: 32px;
    margin: 10px 9px 9px 11px;
    padding: 0 10px;
    border: 1px solid #dcdcdc;
}
.search svg {
    width: 20px;
    height: 20px;
}
.search input {
    flex: 1;
    border: none;
    font: inherit;
    font-size: 15px;
}
.search input::placeholder {
    color: #a8a8a8;
}
.treewrap {
    display: flex;
    flex: 1;
    min-height: 0;
}
.tree {
    flex: 1;
    overflow: hidden;
    list-style: none;
    font-size: 17px;
    color: #222;
}
.tree li {
    display: flex;
    align-items: center;
    height: 30px;
    padding-left: 2px;
    white-space: nowrap;
}
.tree .sel {
    background: #f0f0f0;
    box-shadow: inset 0 0 0 1px #dedede;
}
.tree i, .tree b {
    position: relative;
    width: 24px;
    height: 30px;
    flex: none;
}
.tree b {
    margin-right: 8px;
}
.tree svg {
    width: 24px;
    height: 24px;
    margin-right: 7px;
}
.tree i::before, .tree i::after, .tree b::before, .tree b::after {
    content: "";
    position: absolute;
}
.tree .v::before, .tree .t::before {
    left: 12px;
    top: 0;
    height: 30px;
    border-left: 1px dashed #b0b0b0;
}
.tree .l::before {
    left: 12px;
    top: 0;
    height: 15px;
    border-left: 1px dashed #b0b0b0;
}
.tree .t::after, .tree .l::after, .tree .dash::after {
    left: 12px;
    top: 15px;
    width: 12px;
    border-top: 1px dashed #b0b0b0;
}
.tree .dash::after {
    left: 0;
    width: 24px;
}
.tree .minus::before {
    left: 6px;
    top: 13px;
    width: 12px;
    height: 3px;
    background: #808080;
}
.tree .plus::after {
    left: 11px;
    top: 9px;
    width: 3px;
    height: 11px;
    background: #808080;
}

/* scroll bars */
.vscroll {
    display: flex;
    flex-direction: column;
    align-items: center;
    width: 21px;
    background: #e8e8e8;
}
.vscroll button {
    width: 21px;
    height: 21px;
    background: #f0f0f0;
}
.vscroll .thumbbar {
    width: 10px;
    height: 130px;
    margin: 54px 0 auto;
    border-radius: 5px;
    background: #8a8a8a;
}
.vscroll.view .thumbbar {
    height: 22px;
    margin: auto 0;
}
.chev {
    width: 12px;
    height: 8px;
}
.down {
    transform: rotate(180deg);
}
.lft {
    transform: rotate(-90deg);
}
.rgt {
    transform: rotate(90deg);
}

/* document area */
.docs {
    display: flex;
    flex-direction: column;
    flex: 1;
    min-width: 0;
}
.doctabs {
    display: flex;
    flex: none;
    height: 27px;
    background: #cbcbcb;
    border-bottom: 3px solid #fff;
}
.doctabs button {
    width: 159px;
    gap: 10px;
    padding: 0 6px 0 5px;
    justify-content: flex-start;
}
.doctabs .active {
    gap: 11px;
    background: #fff;
    font-weight: bold;
}
.doctabs .x {
    width: 12px;
    height: 12px;
    margin-left: auto;
}
.doctabs .list {
    width: 20px;
    padding: 0 4px;
    margin-left: auto;
}
.viewrow {
    display: flex;
    flex: 1;
    min-height: 0;
    padding-left: 2px;
    background: #fff;
}
.scene {
    flex: 1;
    min-width: 0;
    height: 100%;
}
.edge {
    stroke: #a8a8a8;
    stroke-width: 1;
}
.line {
    stroke: #151515;
    stroke-width: 1.3;
    stroke-linejoin: round;
}
.thin {
    stroke: #151515;
    stroke-width: 1;
}
.contour path {
    fill: none;
    stroke: #a9a9a9;
    stroke-width: 1.2;
}
.contour .pink {
    stroke: #c0a9a9;
}
.contour .green {
    stroke: #a5d39b;
}
.contour .mag {
    stroke: #d99ad6;
}
.cubetxt {
    font: bold 7px "Open Sans", sans-serif;
    fill: #6d7480;
}
.small {
    font-size: 5px;
}
.viewbar {
    display: flex;
    flex: none;
    height: 24px;
    padding-left: 3px;
    border-bottom: 3px solid #fff;
    background: #f4f4f4;
}
.viewbar > button {
    width: 32px;
    height: 21px;
}
.viewbar .scale {
    width: 96px;
}
.hscroll {
    display: flex;
    align-items: center;
    justify-content: space-between;
    flex: 1;
    background: #e8e8e8;
}
.hscroll button {
    width: 20px;
    height: 21px;
    background: #f0f0f0;
}
.hscroll .thumbbar {
    width: 22px;
    height: 10px;
    border-radius: 5px;
    background: #8a8a8a;
}
.grip {
    width: 21px;
    height: 21px;
}

footer {
    display: flex;
    align-items: center;
    flex: none;
    height: 32px;
    padding: 0 90px 0 2px;
    border-bottom: 2px solid #a9c4cf;
}
footer p {
    flex: 1;
}
.only {
    display: flex;
    align-items: center;
    gap: 4px;
    margin-right: 248px;
}
.only input {
    appearance: none;
    width: 14px;
    height: 14px;
    margin: 0;
    background: #6b6b6b;
}
.only input:checked::before {
    content: "";
    display: block;
    width: 8px;
    height: 4px;
    margin: 3px;
    border-left: 2px solid #fff;
    border-bottom: 2px solid #fff;
    transform: rotate(-45deg);
}
.picks {
    display: flex;
    gap: 12px;
}
.filter {
    gap: 2px;
}
```
